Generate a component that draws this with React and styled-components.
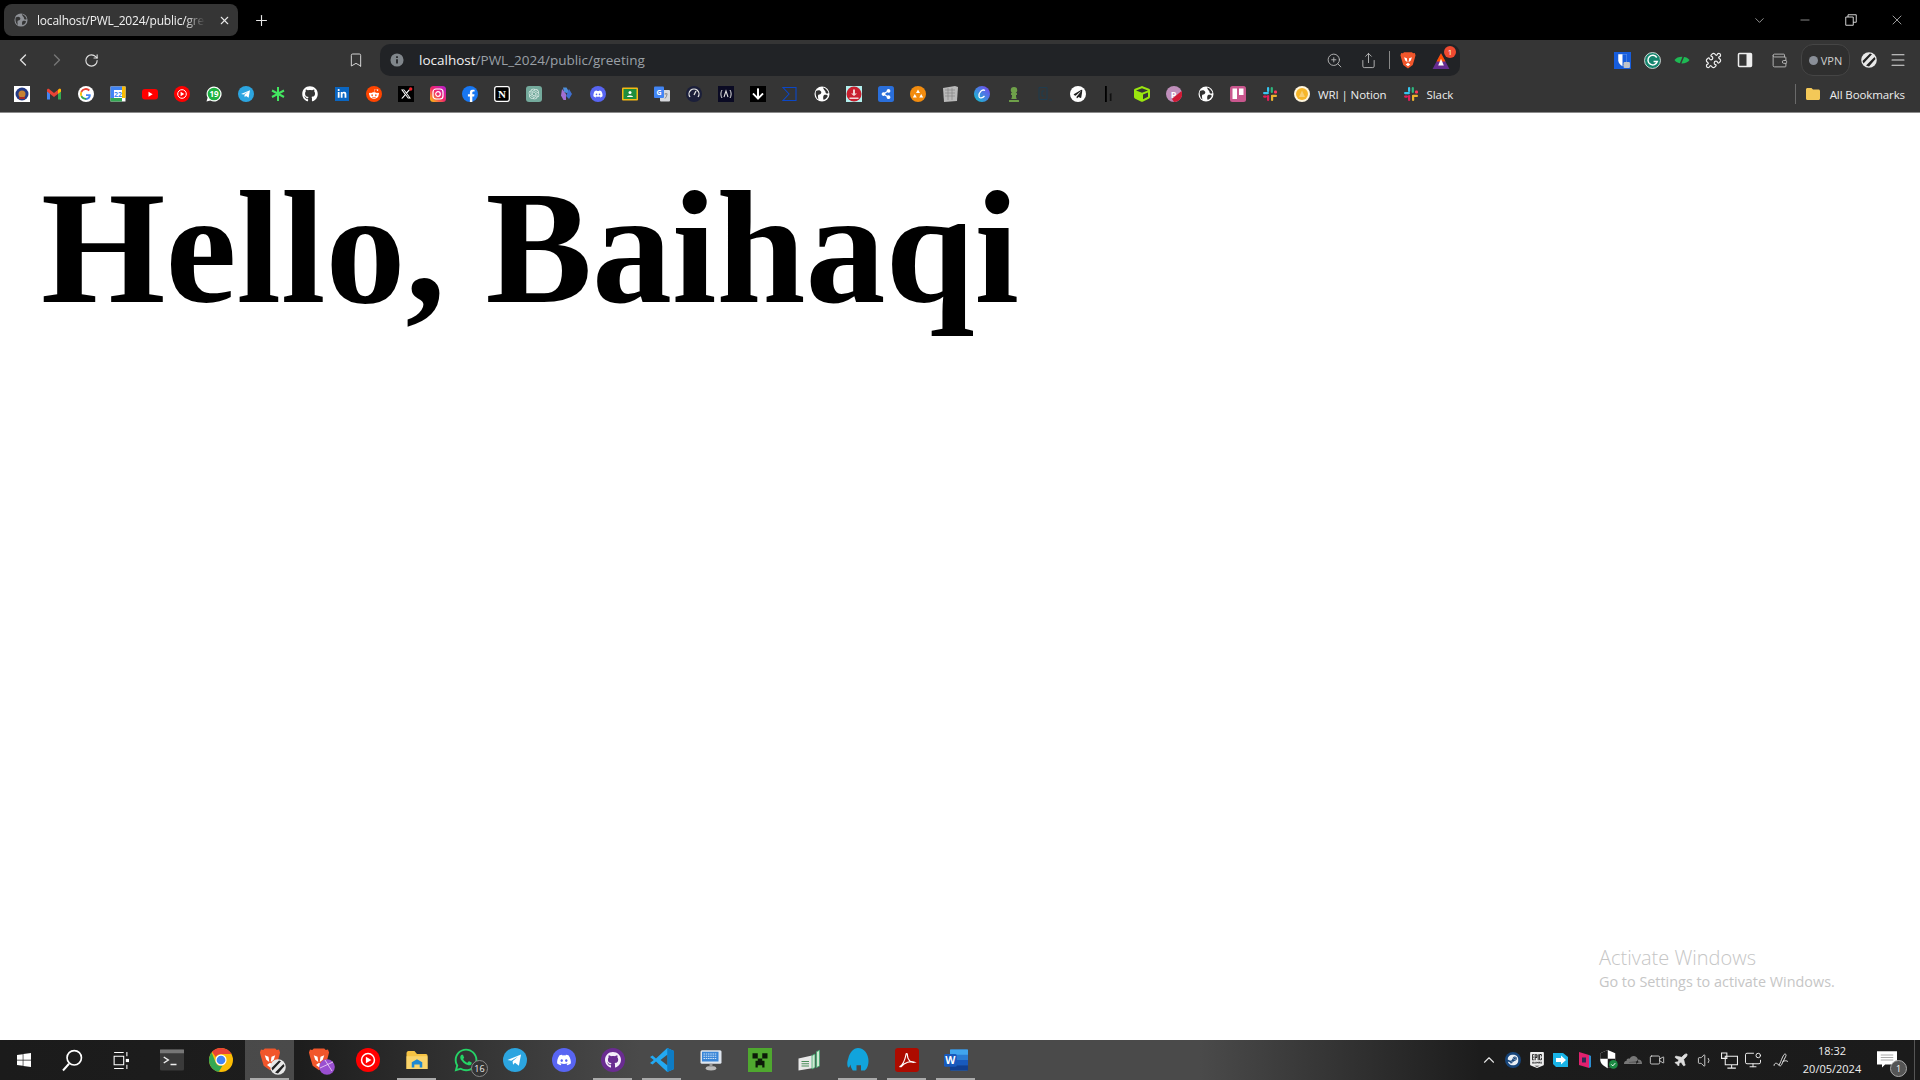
import React from 'react';
import styled, { createGlobalStyle } from 'styled-components';
import {
  ChevronLeft, ChevronRight, ChevronDown, RotateCw, Bookmark, ZoomIn, Share, Menu, Plus, X, Minus,
  Puzzle, Wallet, ChevronUp, Volume1, Plane, Video, MonitorDot,
} from 'lucide-react';
import {
  FaGithub, FaWindows, FaDiscord, FaTelegramPlane, FaWhatsapp, FaRedditAlien, FaFacebookF, FaLinkedinIn,
  FaChessPawn, FaShareAlt, FaArrowDown, FaPaperPlane, FaCube, FaSlack,
} from 'react-icons/fa';
import { SiNotion, SiOpenai, SiX, SiSteam, SiEpicgames, SiCloudflare } from 'react-icons/si';

const UI_FONT = '"Open Sans", "Noto Sans", sans-serif';

const GlobalStyle = createGlobalStyle`
  html, body { margin: 0; padding: 0; background: #fff; overflow: hidden; }
`;

const Screen = styled.div`
  position: relative;
  width: 1920px;
  height: 1080px;
  display: flex;
  flex-direction: column;
  font-family: ${UI_FONT};
`;

/* tab strip */
const TabStrip = styled.div`
  height: 40px;
  background: #000;
  display: flex;
  align-items: center;
  padding-left: 4px;
  color: #e8e8e8;
`;

const Tab = styled.div`
  width: 234px;
  height: 32px;
  border-radius: 8px;
  background: #353535;
  display: flex;
  align-items: center;
  padding: 0 6px 0 10px;
  box-sizing: border-box;
  gap: 9px;
`;

const TabTitle = styled.span`
  width: 168px;
  margin-right: 4px;
  font-size: 12px;
  letter-spacing: -0.2px;
  white-space: nowrap;
  overflow: hidden;
  color: #f1f1f1;
  -webkit-mask-image: linear-gradient(90deg, #000 88%, transparent);
  mask-image: linear-gradient(90deg, #000 88%, transparent);
`;

const NewTab = styled.div`
  width: 46px;
  display: flex;
  justify-content: center;
`;

const WindowControls = styled.div`
  margin-left: auto;
  display: flex;
  align-items: center;
`;

const WindowButton = styled.div`
  width: ${p => p.$w}px;
  display: flex;
  justify-content: center;
`;

/* toolbar */
const Toolbar = styled.div`
  height: 36px;
  box-sizing: border-box;
  padding: 4px 0 0 6px;
  background: #353535;
  display: flex;
  align-items: center;
  color: #e0e0e0;
`;

const Slot = styled.div`
  width: ${p => p.$w || 34}px;
  height: 32px;
  flex: none;
  margin-left: ${p => p.$ml || 0}px;
  display: flex;
  align-items: center;
  justify-content: center;
  color: ${p => p.$dim ? '#777' : 'inherit'};
`;

const OmniBox = styled.div`
  width: 1080px;
  height: 32px;
  margin-left: 8px;
  flex: none;
  border-radius: 10px;
  background: #212326;
  display: flex;
  align-items: center;
  padding-left: 10px;
  box-sizing: border-box;
  font-size: 13.5px;
`;

const Url = styled.span`
  margin-left: 15px;
  color: #9aa0a6;
  b { font-weight: 400; color: #f1f1f1; }
`;

const OmniActions = styled.div`
  margin-left: auto;
  display: flex;
  align-items: center;
  color: #b8b8b8;
`;

const ActionDivider = styled.div`
  width: 1px;
  height: 18px;
  margin: 0 2px 0 4px;
  background: #888;
`;

const Extensions = styled.div`
  margin-left: 147px;
  display: flex;
  align-items: center;
`;

const VpnPill = styled.div`
  width: 49px;
  height: 32px;
  margin-left: 4px;
  box-sizing: border-box;
  border: 1px solid #454545;
  border-radius: 12px;
  background: #2f2f2f;
  display: flex;
  align-items: center;
  justify-content: center;
  gap: 3px;
  font-size: 11px;
  color: #cfcfcf;
`;

const VpnDot = styled.span`
  width: 9px;
  height: 9px;
  border-radius: 50%;
  background: #8a8f98;
`;

/* bookmarks bar */
const BookmarksBar = styled.div`
  height: 36px;
  padding-left: 6px;
  background: #353535;
  border-bottom: 1px solid #8c8c8c;
  display: flex;
  align-items: center;
  font-size: 11.5px;
  letter-spacing: -0.1px;
  color: #ededed;
`;

const BookmarkIcon = styled.div`
  width: 32px;
  height: 32px;
  flex: none;
  display: flex;
  align-items: center;
  justify-content: center;
`;

const NamedBookmark = styled.div`
  display: flex;
  align-items: center;
  gap: 8px;
  padding: 0 8px;
`;

const AllBookmarks = styled.div`
  margin-left: auto;
  height: 20px;
  padding: 0 15px 0 9px;
  border-left: 1px solid #6a6a6a;
  display: flex;
  align-items: center;
  gap: 9px;
`;

/* page content */
const Page = styled.main`
  flex: 1;
  background: #fff;
  padding: 43px 40px 0 41px;
`;

const Heading = styled.h1`
  margin: 0;
  font-family: "Liberation Serif", "Times New Roman", serif;
  font-size: 160px;
  font-weight: 700;
  color: #000;
`;

const Watermark = styled.div`
  position: absolute;
  left: 1599px;
  top: 945px;
  color: #c6c6c6;
  font-size: 14.4px;
  line-height: 21px;
  pointer-events: none;
`;

const WatermarkTitle = styled.div`
  font-size: 20px;
  line-height: 26px;
  font-weight: 300;
`;

/* taskbar */
const Taskbar = styled.footer`
  height: 40px;
  background: linear-gradient(90deg, #1b1b1b 0, #1d1d1d 300px, #4a4a4a 640px, #4a4a4a 1200px, #1c1c1c 1480px, #1b1b1b 100%);
  display: flex;
  align-items: center;
  color: #fff;
`;

const SystemButton = styled.div`
  width: 48px;
  height: 40px;
  display: flex;
  align-items: center;
  justify-content: center;
`;

const AppList = styled.div`
  display: flex;
  padding-left: 3px;
`;

const AppButton = styled.div`
  position: relative;
  width: 49px;
  height: 40px;
  display: flex;
  align-items: center;
  justify-content: center;
  background: ${p => p.$active ? 'rgba(255,255,255,0.2)' : 'transparent'};
  &::after {
    content: "";
    display: ${p => p.$running ? 'block' : 'none'};
    position: absolute;
    left: 5px;
    right: 5px;
    bottom: 0;
    height: 2px;
    background: #aaa;
  }
`;

const Badge = styled.span`
  position: absolute;
  right: 2px;
  bottom: 3px;
  width: 15px;
  height: 15px;
  border-radius: 50%;
  background: #333;
  border: 1px solid #888;
  font-size: 9px;
  line-height: 15px;
  text-align: center;
  color: #eee;
`;

const Tray = styled.div`
  margin-left: auto;
  padding-right: 5px;
  display: flex;
  align-items: center;
  color: #e6e6e6;
`;

const TrayIcon = styled.div`
  width: 24px;
  display: flex;
  justify-content: center;
  &:nth-child(13) { margin-left: 4px; }
`;

const Clock = styled.div`
  width: 70px;
  margin-left: 4px;
  text-align: center;
  font-size: 11px;
  line-height: 18px;
  color: #eee;
`;

const Notifications = styled.div`
  position: relative;
  width: 45px;
  height: 40px;
  margin-left: 3px;
  padding-right: 10px;
  box-sizing: border-box;
  border-right: 1px solid #555;
  display: flex;
  align-items: center;
  justify-content: center;
`;

const Svg = ({ s = 16, children }) => (
  <svg width={s} height={s} viewBox="0 0 16 16" fill="none" style={{ display: 'block' }}>{children}</svg>
);

const Globe = ({ fg = '#fff', bg = '#333', s = 16 }) => (
  <Svg s={s}>
    <circle cx="8" cy="8" r="7.5" fill={fg} />
    <path d="M2 5c2-1 4-1 5 .5s-.5 3-2 3-1 3-.5 5C2.500 12.500 1 8 2 5zM9 1.500c2 0 5 3 5.500 5.500-1.500 1-3 .5-3-1S9.500 4 9 1.500zM10 9c2-.5 3.500 0 3.800 1-1 2.500-3 3.500-4.300 3.800C9 12 9 10 10 9z" fill={bg} />
  </Svg>
);

const Brave = ({ s = 16 }) => (
  <Svg s={s}>
    <path d="M4.500 1h7l1 1 1.500-.3.700 2-.7 2.800-1.800 6L8 15.500l-4.200-3-1.800-6-.7-2.800.7-2 1.500.3z" fill="#f1562b" />
    <path d="M8 10.500 6 12l2 1.500 2-1.500zM4.500 5.500 7 6.500 7.500 10 5.500 8.500zM11.500 5.500 9 6.500 8.500 10l2-1.500z" fill="#fff" />
  </Svg>
);

const Gmail = () => (
  <Svg>
    <path d="M1 13.500V5l3 2.300v6.200z" fill="#4285f4" />
    <path d="M12 13.500V7.300L15 5v8.500z" fill="#34a853" />
    <path d="M1 5.500V4c0-1 1.300-1.600 2-1l5 4 5-4c.7-.6 2-.1 2 1v1.500L8 11z" fill="#ea4335" />
    <path d="M12 4l1-1c.7-.6 2-.1 2 1v1.500l-3 2.300z" fill="#fbbc04" />
  </Svg>
);

const Google = () => (
  <Svg>
    <circle cx="8" cy="8" r="8" fill="#fff" />
    <path d="M12.600 8.200H8v1.700h2.700c-.4 1.300-1.400 2-2.700 2v2c2.900 0 4.800-2 4.800-4.700z" fill="#4285f4" />
    <path d="M4.100 9.500C4.700 11 6.200 11.900 8 11.900v2a6 6 0 0 1-5.400-3.300z" fill="#34a853" />
    <path d="M2.600 5.300a6 6 0 0 0 0 5.300l1.500-1.100a4 4 0 0 1 0-3z" fill="#fbbc04" />
    <path d="M2.600 5.300A6 6 0 0 1 12 3.700l-1.400 1.500A4 4 0 0 0 4.100 6.500z" fill="#ea4335" />
  </Svg>
);

const Calendar = () => (
  <Svg>
    <rect x="0.500" y="0.500" width="15" height="15" fill="#fff" />
    <path d="M0.500 0.500H12V4H4v8H0.500z" fill="#4285f4" />
    <path d="M0.500 12H12v3.500H0.500z" fill="#34a853" />
    <path d="M12 0.500h3.500V12H12z" fill="#fbbc04" />
    <text x="8" y="10.500" fontSize="7" fontWeight="700" fill="#4285f4" textAnchor="middle" fontFamily={UI_FONT}>22</text>
  </Svg>
);

const YouTube = () => (
  <Svg>
    <rect x="0" y="3" width="16" height="10.500" rx="3" fill="#f00" />
    <path d="M6.500 5.800v5l4.200-2.500z" fill="#fff" />
  </Svg>
);

const YtMusic = ({ s = 16 }) => (
  <Svg s={s}>
    <circle cx="8" cy="8" r="8" fill="#f00" />
    <circle cx="8" cy="8" r="4.300" stroke="#fff" strokeWidth="1" />
    <path d="M6.600 5.800v4.400L10.300 8z" fill="#fff" />
  </Svg>
);

const WhatsAppCount = () => (
  <Svg>
    <path d="M8 .5a7.500 7.500 0 0 0-6.400 11.300L.5 15.500l3.800-1A7.500 7.500 0 1 0 8 .5z" fill="#fff" />
    <circle cx="8" cy="8" r="6.300" fill="#1fb141" />
    <text x="8" y="10.800" fontSize="8" fontWeight="700" fill="#fff" textAnchor="middle" fontFamily={UI_FONT}>19</text>
  </Svg>
);

const Telegram = ({ s = 16 }) => (
  <Svg s={s}>
    <circle cx="8" cy="8" r="8" fill="#2ca5e0" />
    <path d="M3 8l9-3.700-1.400 7.500-2.600-1.900-1.300 1.300-.3-2.400 3.700-3.100-4.600 2.800z" fill="#fff" />
  </Svg>
);

const Star = () => (
  <Svg>
    <path d="M8 1v14M2 4.500l12 6.500M14 4.500 2 11" stroke="#43e660" strokeWidth="2" />
    <circle cx="8" cy="7.500" r="2" fill="#43e660" />
  </Svg>
);

const LinkedIn = () => (
  <Svg>
    <rect x="1" y="1" width="14" height="14" fill="#0a66c2" />
    <g transform="translate(3 3)"><FaLinkedinIn size={10} color="#fff" /></g>
  </Svg>
);

const Reddit = () => (
  <Svg>
    <circle cx="8" cy="8" r="8" fill="#ff4500" />
    <g transform="translate(2.500 2.500)"><FaRedditAlien size={11} color="#fff" /></g>
  </Svg>
);

const XLogo = () => (
  <Svg>
    <rect width="16" height="16" fill="#000" />
    <g transform="translate(3 3)"><SiX size={10} color="#fff" /></g>
    <circle cx="12.700" cy="3" r="1.700" fill="#f0262d" />
  </Svg>
);

const Instagram = () => (
  <Svg>
    <defs>
      <linearGradient id="ig" x1="0" y1="1" x2="1" y2="0">
        <stop offset="0" stopColor="#fdc70c" />
        <stop offset="0.5" stopColor="#f1266c" />
        <stop offset="1" stopColor="#b41fd6" />
      </linearGradient>
    </defs>
    <rect width="16" height="16" rx="3.500" fill="url(#ig)" />
    <rect x="3" y="3" width="10" height="10" rx="3" stroke="#fff" strokeWidth="1.200" />
    <circle cx="8" cy="8" r="2.300" stroke="#fff" strokeWidth="1.200" />
  </Svg>
);

const Facebook = () => (
  <Svg>
    <circle cx="8" cy="8" r="8" fill="#1877f2" />
    <g transform="translate(3 3.500)"><FaFacebookF size={12.500} color="#fff" /></g>
  </Svg>
);

const Notion = () => (
  <Svg>
    <rect x="0.700" y="0.700" width="14.600" height="14.600" rx="2" fill="#000" stroke="#fff" strokeWidth="1.300" />
    <text x="8" y="12" fontSize="11" fontWeight="700" fill="#fff" textAnchor="middle" fontFamily="'Liberation Serif', serif">N</text>
  </Svg>
);

const ChatGpt = () => (
  <Svg>
    <rect width="16" height="16" rx="3" fill="#74aa9c" />
    <g transform="translate(2.500 2.500)"><SiOpenai size={11} color="#e8f3f0" /></g>
  </Svg>
);

const Copilot = () => (
  <Svg>
    <path d="M5 1.500h3.500l3 5-3 .5-2.500-1z" fill="#4d8edb" />
    <path d="M11 3l3 5-3 5-3-3z" fill="#3f6fd0" />
    <path d="M4 3l4 5v6H5.500L3 9.500z" fill="#a26fd3" />
  </Svg>
);

const DiscordRound = ({ s = 16, bg = '#5865f2' }) => (
  <Svg s={s}>
    <circle cx="8" cy="8" r="8" fill={bg} />
    <g transform="translate(3 3)"><FaDiscord size={10} color="#fff" /></g>
  </Svg>
);

const Classroom = () => (
  <Svg>
    <rect y="1.500" width="16" height="13" rx="1" fill="#f5ba14" />
    <rect x="1.500" y="3" width="13" height="10" fill="#1e8e3e" />
    <circle cx="8" cy="6.500" r="1.500" fill="#fff" />
    <path d="M5 11c0-2 6-2 6 0z" fill="#fff" />
  </Svg>
);

const Translate = () => (
  <Svg>
    <rect x="6" y="4" width="10" height="11.500" rx="1" fill="#d6d8dc" />
    <rect x="0" y="0.500" width="10" height="11.500" rx="1" fill="#4285f4" />
    <text x="5" y="8.800" fontSize="7" fontWeight="700" fill="#fff" textAnchor="middle" fontFamily={UI_FONT}>G</text>
    <path d="M10.500 8h3M12 7v1M11 12.500c1-1 1.800-2.500 2-4" stroke="#777" strokeWidth="0.800" />
  </Svg>
);

const Gauge = () => (
  <Svg>
    <circle cx="8" cy="8" r="8" fill="#1b1f3a" />
    <path d="M4 11a5 5 0 1 1 8 0" stroke="#e8e8e8" strokeWidth="1.200" />
    <path d="M8 9l2-4" stroke="#e8e8e8" strokeWidth="1.200" />
  </Svg>
);

const CodeCamp = () => (
  <Svg>
    <rect width="16" height="16" fill="#0a0a23" />
    <path d="M4 4C2.500 6 2.500 10 4 12M12 4c1.500 2 1.500 6 0 8" stroke="#ddd" strokeWidth="1" />
    <path d="M6 11l2-6 2 6" stroke="#ddd" strokeWidth="1.100" />
  </Svg>
);

const DownArrow = () => (
  <Svg>
    <rect width="16" height="16" fill="#000" />
    <g transform="translate(1.500 1.500)"><FaArrowDown size={13} color="#fff" /></g>
  </Svg>
);

const Sigma = () => (
  <Svg>
    <path d="M1 1.500h13v13H1l6-6.500z" stroke="#0b47c7" strokeWidth="1.100" />
  </Svg>
);

const RedDownload = () => (
  <Svg>
    <rect width="16" height="16" fill="#b4f0ee" />
    <circle cx="8" cy="8" r="7.500" fill="#c9202f" />
    <path d="M7 3.500h2v4h2L8 10 5 7.500h2zM3.500 11.500h9v1.500h-9z" fill="#f3d6d6" />
  </Svg>
);

const ShareTile = () => (
  <Svg>
    <rect width="16" height="16" rx="2.500" fill="#2a6fdb" />
    <g transform="translate(3 3)"><FaShareAlt size={10} color="#fff" /></g>
  </Svg>
);

const OrangeNet = () => (
  <Svg>
    <circle cx="8" cy="8" r="8" fill="#f28c0f" />
    <path d="M8 3.500 10 7H6zM4.800 8 6.800 11.500H2.800zM11.200 8l2 3.500h-4z" fill="#fff" />
  </Svg>
);

const GreyPaper = () => (
  <Svg>
    <path d="M1 2 13 0l3 1-1 14-13 1z" fill="#b9b9b9" />
    <path d="M3 4h10M3 7h10M3 10h10M6 2v12M10 2v12" stroke="#888" strokeWidth="0.700" />
  </Svg>
);

const Canva = () => (
  <Svg>
    <defs>
      <linearGradient id="cv" x1="0" y1="1" x2="1" y2="0">
        <stop offset="0" stopColor="#0fc7cf" />
        <stop offset="1" stopColor="#7a3ff2" />
      </linearGradient>
    </defs>
    <circle cx="8" cy="8" r="8" fill="url(#cv)" />
    <path d="M11 4.500C8 2.500 4.500 7 5 10.500c.4 2.300 3.500 1.500 5.500-.5" stroke="#fff" strokeWidth="1.300" />
  </Svg>
);

const Pawn = () => <FaChessPawn size={16} color="#6fa14a" />;

const DarkC = () => (
  <Svg>
    <path d="M1 1.500h8v12H1z" stroke="#1f3c4f" strokeWidth="1" />
    <path d="M6.500 5h-2.500v5h2.500M11 14h3" stroke="#1f3c4f" strokeWidth="1" />
  </Svg>
);

const PlaneBadge = () => (
  <Svg>
    <circle cx="8" cy="8" r="8" fill="#fff" />
    <g transform="translate(3.500 3.500)"><FaPaperPlane size={9} color="#222" /></g>
  </Svg>
);

const HackerOne = () => (
  <Svg>
    <path d="M3 0v16h1.800V0z" fill="#000" />
    <path d="M7.500 8l2-1v8H7.800V9z" fill="#111" />
  </Svg>
);

const Cube = () => <FaCube size={16} color="#9ae60f" />;

const ProductHunt = () => (
  <Svg>
    <circle cx="8" cy="8" r="8" fill="#c08fbb" />
    <path d="M8 16a8 8 0 0 0 7.500-11L6 13z" fill="#d11a35" />
    <text x="7.500" y="11.500" fontSize="9" fontWeight="700" fill="#fff" textAnchor="middle" fontFamily={UI_FONT}>P</text>
  </Svg>
);

const Trello = () => (
  <Svg>
    <rect width="16" height="16" rx="2.500" fill="#c9578e" />
    <rect x="2.500" y="2.500" width="4.500" height="10.500" fill="#fff" />
    <rect x="9" y="2.500" width="4.500" height="6.500" fill="#fff" />
  </Svg>
);

const Slack = () => (
  <Svg>
    <rect x="1" y="6" width="6" height="2.200" rx="1.100" fill="#36c5f0" />
    <rect x="5" y="1" width="2.200" height="5" rx="1.100" fill="#36c5f0" />
    <rect x="8.700" y="1" width="2.200" height="6" rx="1.100" fill="#2eb67d" />
    <rect x="12" y="4.500" width="3" height="3" rx="1.100" fill="#ff3b5c" />
    <rect x="9" y="8.800" width="6" height="2.200" rx="1.100" fill="#ecb22e" />
    <rect x="9" y="9" width="2.200" height="6" rx="1.100" fill="#ecb22e" />
    <rect x="5" y="9" width="2.200" height="6" rx="1.100" fill="#e01e5a" />
    <rect x="1" y="9.500" width="4" height="2.200" rx="1.100" fill="#e01e5a" />
  </Svg>
);

const Wri = () => (
  <Svg>
    <circle cx="8" cy="8" r="8" fill="#fff6de" />
    <circle cx="8" cy="8" r="6" fill="#f6b62a" />
    <path d="M8 4.500 11 11H5z" fill="#f9cf72" />
  </Svg>
);

const College = () => (
  <Svg>
    <rect width="16" height="16" fill="#fff" />
    <circle cx="8" cy="8" r="6.500" fill="#233a86" />
    <circle cx="8" cy="8" r="3.500" fill="#c78232" />
    <path d="M5 11h6v2H5z" fill="#a42a2a" />
  </Svg>
);

const Folder = () => (
  <Svg>
    <path d="M1 3.500C1 2.700 1.600 2 2.500 2h4L8 3.500h5.500c.8 0 1.500.7 1.500 1.500v7.500c0 .8-.7 1.500-1.500 1.500h-11c-.9 0-1.500-.7-1.500-1.500z" fill="#f3c858" />
  </Svg>
);

const Bitwarden = () => (
  <Svg s={17}>
    <rect width="16" height="16" fill="#175ddc" />
    <path d="M4 2h8v6c0 2.500-2 4-4 5.500C6 12 4 10.500 4 8z" fill="#fff" />
    <path d="M8 2h4v6c0 2.500-2 4-4 5.500z" fill="#175ddc" />
    <rect x="9" y="9.500" width="6" height="5.500" rx="1" fill="#bfc3c9" />
  </Svg>
);

const Grammarly = () => (
  <Svg s={17}>
    <circle cx="8" cy="8" r="7.500" fill="#15846d" stroke="#e8e8e8" strokeWidth="0.800" />
    <path d="M12 5.200A4.500 4.500 0 1 0 12.500 9H9" stroke="#fff" strokeWidth="1.400" />
  </Svg>
);

const GreenEye = () => (
  <Svg>
    <path d="M0.500 8C3 3.500 13 3.500 15.500 8 13 12.500 3 12.500 .5 8z" fill="#1eb954" />
    <path d="M10 3 6 13" stroke="#353535" strokeWidth="1.500" />
  </Svg>
);

const SidePanel = () => (
  <Svg>
    <rect x="1.500" y="1.500" width="13" height="13" rx="1" stroke="#eee" strokeWidth="1.500" />
    <rect x="9.500" y="2" width="5" height="12" fill="#eee" />
  </Svg>
);

const TabBadge = styled.span`
  position: absolute;
  right: -4px;
  top: -4px;
  width: 12px;
  height: 12px;
  border-radius: 50%;
  background: #ef4a30;
  color: #fff;
  font-size: 8px;
  line-height: 12px;
  text-align: center;
`;

const BatIcon = styled.div`
  position: relative;
  width: 20px;
  height: 20px;
`;

const BatTriangle = () => (
  <BatIcon>
    <svg width="18" height="18" viewBox="0 0 16 16" style={{ display: 'block', marginTop: 2 }}>
      <path d="M8 1 15.500 15H.5z" fill="#662d91" />
      <path d="M8 1 12 8.500H4z" fill="#ff5000" />
      <path d="M8 6l2.500 6h-5z" fill="#fff" />
    </svg>
    <TabBadge>1</TabBadge>
  </BatIcon>
);

const StripedPen = ({ s = 16 }) => (
  <Svg s={s}>
    <circle cx="8" cy="8" r="7.800" fill="#e8e8e8" />
    <path d="M5 13.500 13.500 5l1 2-6.500 7.500zM1.500 9 9 1.500l2 .7L2.500 11.500z" fill="#222" />
  </Svg>
);

const InfoDot = () => (
  <Svg s={14}>
    <circle cx="8" cy="8" r="7.500" fill="#80868b" />
    <path d="M7 7h2v5H7zM7 3.800h2v2H7z" fill="#212326" />
  </Svg>
);

const TaskView = () => (
  <Svg s={17}>
    <path d="M2 .5h9M2 15.500h9M2 4h9v8H2zM14 0v4M14 12v4" stroke="#fff" strokeWidth="1" />
    <rect x="13" y="6.500" width="3" height="3" fill="#fff" />
  </Svg>
);

const Terminal = () => (
  <Svg s={24}>
    <rect y="1" width="16" height="14" rx="1" fill="#3a3a3a" />
    <rect y="1" width="16" height="2.500" fill="#777" />
    <path d="M2.500 6 5.500 8l-3 2M7 11h4" stroke="#eee" strokeWidth="1" />
  </Svg>
);

const Chrome = () => (
  <Svg s={24}>
    <circle cx="8" cy="8" r="8" fill="#fbbc04" />
    <path d="M8 0a8 8 0 0 1 7 4H8a4 4 0 0 0-3.500 2L2 2.500A8 8 0 0 1 8 0z" fill="#ea4335" />
    <path d="M1.800 3a8 8 0 0 0 4.700 12.900L9 11.800a4 4 0 0 1-4.500-2z" fill="#34a853" />
    <circle cx="8" cy="8" r="3.700" fill="#fff" />
    <circle cx="8" cy="8" r="2.900" fill="#4285f4" />
  </Svg>
);

const BraveStack = styled.div`
  position: relative;
  width: 24px;
  height: 26px;
`;

const BraveOverlay = styled.div`
  position: absolute;
  right: -4px;
  bottom: -2px;
`;

const BraveWithBadge = ({ badge }) => (
  <BraveStack>
    <Brave s={24} />
    <BraveOverlay>{badge}</BraveOverlay>
  </BraveStack>
);

const ProfileDot = () => (
  <Svg s={16}>
    <circle cx="8" cy="8" r="7.800" fill="#9a4fd1" />
    <path d="M1 9 14 3M6 1l7 11" stroke="#f3d9f7" strokeWidth="0.800" />
  </Svg>
);

const Explorer = () => (
  <Svg s={24}>
    <path d="M1 3.500C1 2.700 1.500 2 2.300 2h4L8 4h6c.6 0 1 .5 1 1v9H1z" fill="#f6c344" />
    <path d="M1 5.500h14V14H1z" fill="#fad46b" />
    <path d="M4.500 13V9.500l3.500-2 3.500 2V13H9.800v-2H6.200v2z" fill="#1e88d2" />
  </Svg>
);

const GithubPurple = () => (
  <Svg s={24}>
    <circle cx="8" cy="8" r="8" fill="#6a2c91" />
    <g transform="translate(2.500 2.500)"><FaGithub size={11} color="#f4eefa" /></g>
  </Svg>
);

const VsCode = () => (
  <Svg s={24}>
    <path d="M11.500 0 16 2v12l-4.500 2L4 9l-2.300 2L0 10l2.500-2L0 6l1.700-1L4 7z" fill="#23a9f2" />
    <path d="M11.500 0 16 2v12l-4.500 2z" fill="#0e7cc4" />
    <path d="M11.500 4.500 7 8l4.500 3.500z" fill="#4a4a4a" />
  </Svg>
);

const RemoteDesktop = () => (
  <Svg s={24}>
    <rect x="1" y="1.500" width="14" height="9" rx="1" fill="#dfe6ef" />
    <rect x="2" y="2.500" width="11" height="6.500" fill="#3a86d8" />
    <path d="M3 4h9M3 5.500h9M3 7h9" stroke="#cfe3f7" strokeWidth="0.700" strokeDasharray="1 0.500" />
    <ellipse cx="8" cy="13.500" rx="3.500" ry="1.500" fill="#bbb" />
    <path d="M7 10.500h2V12.500H7z" fill="#999" />
  </Svg>
);

const Creeper = () => (
  <Svg s={24}>
    <rect width="16" height="16" fill="#4fa82f" />
    <path d="M3 3.500h3.500V7H3zM9.500 3.500H13V7H9.500zM6.500 7h3v1.500H11V13H9.500v-1.500h-3V13H5V8.500h1.500z" fill="#0c1a08" />
  </Svg>
);

const Stacks = () => (
  <Svg s={24}>
    <path d="M1 7l9-2v8.500L1 15z" fill="#e8e8e8" />
    <path d="M10 5l2-1v9l-2 1zM13 2.500l2-1V12l-2 1z" fill="#cfe8d2" stroke="#39a96b" strokeWidth="0.500" />
    <path d="M3 9h5M3 10.500h5M3 12h5" stroke="#4b8f5b" strokeWidth="0.700" />
  </Svg>
);

const Elephant = () => (
  <Svg s={24}>
    <path d="M8 0c4 0 7 4 7 8.500 0 3-1 5.500-2.500 6.500H10v-3.500H7V15H4.500C3.500 13.500 3 12 3 11 2.500 12 2.500 13 1.500 13 .8 12 .5 9.500 1.500 7 2.500 3 5 0 8 0z" fill="#11a4dc" />
  </Svg>
);

const Acrobat = () => (
  <Svg s={24}>
    <rect width="16" height="16" rx="2" fill="#ad0b00" />
    <path d="M3 12.500c2-1 3.500-4 4.300-8 .2-1.300 1-1 1 .5 0 2.500 2 5 4.700 4.500-2.700-1-6.500 0-9 3z" stroke="#fff" strokeWidth="0.800" />
  </Svg>
);

const Word = () => (
  <Svg s={24}>
    <rect x="4" y="1" width="12" height="14" rx="1" fill="#2b7cd3" />
    <rect x="4" y="1" width="12" height="3.500" fill="#41a5ee" />
    <rect x="4" y="8" width="12" height="3.500" fill="#185abd" />
    <rect x="4" y="11.500" width="12" height="3.500" fill="#103f91" />
    <rect x="0" y="4" width="8.500" height="8.500" rx="1" fill="#185abd" />
    <text x="4.200" y="10.800" fontSize="7" fontWeight="700" fill="#fff" textAnchor="middle" fontFamily={UI_FONT}>W</text>
  </Svg>
);

const SteamRound = () => (
  <Svg>
    <circle cx="8" cy="8" r="8" fill="#17457a" />
    <g transform="translate(2.500 2.500)"><SiSteam size={11} color="#e8eef5" /></g>
  </Svg>
);

const SquareArrow = () => (
  <Svg>
    <path d="M0 1h10l5 4v10H3L0 12z" fill="#19b3e6" />
    <path d="M3 6h5V3.500L13 8l-5 4.500V10H3z" fill="#fff" />
  </Svg>
);

const PinkTag = () => (
  <Svg>
    <path d="M2 0l10 3v13L2 13z" fill="#e0216e" />
    <path d="M12 3l2 1v11l-2 1z" fill="#2b8ed1" />
    <rect x="5" y="5.500" width="4" height="5" fill="#2a2a55" />
  </Svg>
);

const Shield = () => (
  <Svg s={20}>
    <path d="M7 0 13 2.500V8c0 3-3 5-6 6.500C4 13 1 11 1 8V2.500z" fill="#fff" />
    <path d="M7 0v7H1V2.500zM7 7h6v1c0 3-3 5-6 6.500z" fill="#1b1b1b" />
    <circle cx="11.500" cy="11.500" r="3.500" fill="#1c8a44" />
    <path d="M9.800 11.500l1.200 1.200 2-2.200" stroke="#fff" strokeWidth="0.800" />
  </Svg>
);

const NetworkTray = () => (
  <Svg s={17}>
    <path d="M.5 1h5v5H.5zM4 4h11.500v8H4zM10 12v3M6 15.200h8" stroke="#eee" strokeWidth="1" />
  </Svg>
);

const PenTray = () => (
  <Svg s={17}>
    <path d="M1 13c0-3 3-3 4-1 1 2 3-6 5-9 1-2 3-1 2 1l-4 8c-1 2-3 1-2-1M9 9c2-1 4-1 5 0" stroke="#e6e6e6" strokeWidth="0.900" />
  </Svg>
);

const Bubble = () => (
  <Svg s={20}>
    <path d="M0 1h16v10.500H6.500L4 14v-2.500H0z" fill="#fff" />
    <path d="M3 4h10M3 6h10M3 8h10" stroke="#aaa" strokeWidth="0.800" />
  </Svg>
);

const CountBadge = styled.span`
  position: absolute;
  left: 20px;
  top: 20px;
  width: 15px;
  height: 15px;
  border-radius: 50%;
  background: #555;
  border: 1px solid #aaa;
  font-size: 9px;
  line-height: 15px;
  text-align: center;
  color: #fff;
`;

const bookmarks = [
  <College />, <Gmail />, <Google />, <Calendar />, <YouTube />, <YtMusic />, <WhatsAppCount />, <Telegram />,
  <Star />, <FaGithub size={16} color="#fff" />, <LinkedIn />, <Reddit />, <XLogo />, <Instagram />, <Facebook />,
  <Notion />, <ChatGpt />, <Copilot />, <DiscordRound />, <Classroom />, <Translate />, <Gauge />, <CodeCamp />,
  <DownArrow />, <Sigma />, <Globe />, <RedDownload />, <ShareTile />, <OrangeNet />, <GreyPaper />, <Canva />,
  <Pawn />, <DarkC />, <PlaneBadge />, <HackerOne />, <Cube />, <ProductHunt />, <Globe />, <Trello />, <Slack />,
];

const apps = [
  { icon: <Terminal /> },
  { icon: <Chrome /> },
  { icon: <BraveWithBadge badge={<StripedPen />} />, active: true, running: true },
  { icon: <BraveWithBadge badge={<ProfileDot />} /> },
  { icon: <YtMusic s={24} /> },
  { icon: <Explorer />, running: true },
  { icon: <FaWhatsapp size={26} color="#25d366" />, badge: '16' },
  { icon: <Telegram s={24} /> },
  { icon: <DiscordRound s={24} /> },
  { icon: <GithubPurple />, running: true },
  { icon: <VsCode />, running: true },
  { icon: <RemoteDesktop /> },
  { icon: <Creeper /> },
  { icon: <Stacks /> },
  { icon: <Elephant />, running: true },
  { icon: <Acrobat />, running: true },
  { icon: <Word />, running: true },
];

const trayIcons = [
  <ChevronUp size={18} strokeWidth={1.5} />,
  <SteamRound />,
  <SiEpicgames size={16} color="#eee" />,
  <SquareArrow />,
  <PinkTag />,
  <Shield />,
  <SiCloudflare size={18} color="#777" />,
  <Video size={16} strokeWidth={1.2} />,
  <Plane size={16} fill="#ddd" strokeWidth={1} />,
  <Volume1 size={17} strokeWidth={1.2} />,
  <NetworkTray />,
  <MonitorDot size={18} color="#eee" strokeWidth={1.3} />,
  <PenTray />,
];

export default function App() {
  return (
    <Screen>
      <GlobalStyle />
      <TabStrip>
        <Tab>
          <Globe fg="#8e9196" bg="#353535" s={14} />
          <TabTitle>localhost/PWL_2024/public/gree</TabTitle>
          <X size={13} strokeWidth={2} />
        </Tab>
        <NewTab><Plus size={17} strokeWidth={1.6} /></NewTab>
        <WindowControls>
          <WindowButton $w={46}><ChevronDown size={15} strokeWidth={1} /></WindowButton>
          <WindowButton $w={46}><Minus size={14} strokeWidth={1} /></WindowButton>
          <WindowButton $w={46}>
            <Svg s={12}><path d="M1 4h10v11H1zM4 4V1h11v10h-4" stroke="#e8e8e8" strokeWidth="1.200" /></Svg>
          </WindowButton>
          <WindowButton $w={46}><X size={16} strokeWidth={1} /></WindowButton>
        </WindowControls>
      </TabStrip>

      <Toolbar>
        <Slot><ChevronLeft size={20} strokeWidth={1.6} /></Slot>
        <Slot $dim><ChevronRight size={20} strokeWidth={1.6} /></Slot>
        <Slot><RotateCw size={15} strokeWidth={1.8} /></Slot>
        <Slot $w={32} $ml={232}><Bookmark size={16} strokeWidth={1.4} /></Slot>
        <OmniBox>
          <InfoDot />
          <Url><b>localhost</b>/PWL_2024/public/greeting</Url>
          <OmniActions>
            <Slot><ZoomIn size={17} strokeWidth={1.3} /></Slot>
            <Slot><Share size={17} strokeWidth={1.3} /></Slot>
            <ActionDivider />
            <Slot $w={32}><Brave s={18} /></Slot>
            <Slot $w={36}><BatTriangle /></Slot>
          </OmniActions>
        </OmniBox>
        <Extensions>
          <Slot $w={30}><Bitwarden /></Slot>
          <Slot $w={30}><Grammarly /></Slot>
          <Slot $w={30}><GreenEye /></Slot>
          <Slot $w={32}><Puzzle size={17} color="#eee" strokeWidth={1.7} /></Slot>
          <Slot $w={32}><SidePanel /></Slot>
          <Slot $w={36}><Wallet size={17} strokeWidth={1.3} color="#bbb" /></Slot>
          <VpnPill><VpnDot />VPN</VpnPill>
          <Slot $w={38}><StripedPen /></Slot>
          <Slot $w={20}><Menu size={18} strokeWidth={1.4} /></Slot>
        </Extensions>
      </Toolbar>

      <BookmarksBar>
        {bookmarks.map((icon, i) => <BookmarkIcon key={i}>{icon}</BookmarkIcon>)}
        <NamedBookmark><Wri />WRI | Notion</NamedBookmark>
        <NamedBookmark><Slack />Slack</NamedBookmark>
        <AllBookmarks><Folder />All Bookmarks</AllBookmarks>
      </BookmarksBar>

      <Page>
        <Heading>Hello, Baihaqi</Heading>
      </Page>

      <Watermark>
        <WatermarkTitle>Activate Windows</WatermarkTitle>
        Go to Settings to activate Windows.
      </Watermark>

      <Taskbar>
        <SystemButton><FaWindows size={16} /></SystemButton>
        <SystemButton>
          <Svg s={24}><circle cx="9.500" cy="6.500" r="4.800" stroke="#fff" strokeWidth="1.100" /><path d="M6 10.500 2 15" stroke="#fff" strokeWidth="1.300" /></Svg>
        </SystemButton>
        <SystemButton><TaskView /></SystemButton>
        <AppList>
          {apps.map((app, i) => (
            <AppButton key={i} $active={app.active} $running={app.running}>
              {app.icon}
              {app.badge && <Badge>{app.badge}</Badge>}
            </AppButton>
          ))}
        </AppList>
        <Tray>
          {trayIcons.map((icon, i) => <TrayIcon key={i}>{icon}</TrayIcon>)}
          <Clock>18:32<br />20/05/2024</Clock>
          <Notifications>
            <Bubble />
            <CountBadge>1</CountBadge>
          </Notifications>
        </Tray>
      </Taskbar>
    </Screen>
  );
}
